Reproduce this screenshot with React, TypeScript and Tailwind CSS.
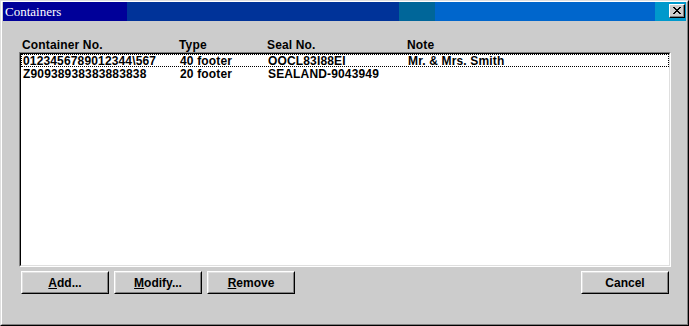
import React from "react";

const rows = [
  { c: "0123456789012344\\567", t: "40 footer", s: "OOCL83I88EI", n: "Mr. & Mrs. Smith" },
  { c: "Z90938938383883838", t: "20 footer", s: "SEALAND-9043949", n: "" },
];

function Btn({ children, className = "" }: { children: React.ReactNode; className?: string }) {
  return (
    <div className={"w-[88px] h-[23px] border-t border-l border-t-white border-l-white border-b border-r border-b-black border-r-black " + className}>
      <div className="w-full h-full border-t border-l border-t-[#dfdfdf] border-l-[#dfdfdf] border-b border-r border-b-[#808080] border-r-[#808080] bg-[#cccccc] flex items-center justify-center text-[12px] font-bold text-black leading-none">
        {children}
      </div>
    </div>
  );
}

export default function App() {
  return (
    <div
      className="w-[689px] h-[326px] bg-[#cccccc] border-t border-l border-t-[#dfdfdf] border-l-[#dfdfdf] border-b border-r border-b-black border-r-black"
      style={{ fontFamily: '"Liberation Sans", Arial, sans-serif' }}
    >
      <div className="w-full h-full border-t border-l border-t-white border-l-white border-b border-r border-b-[#808080] border-r-[#808080] flex flex-col pl-px pr-px">
        {/* title bar */}
        <div className="h-[19px] flex shrink-0">
          <div className="w-[124px] bg-[#000099] flex items-center pl-[2px]">
            <span className="text-white text-[13px] leading-none" style={{ fontFamily: '"Liberation Serif", "Times New Roman", serif' }}>
              Containers
            </span>
          </div>
          <div className="w-[272px] bg-[#003399]" />
          <div className="w-[36px] bg-[#006699]" />
          <div className="w-[220px] bg-[#0066cc]" />
          <div className="flex-1 bg-[#0099cc] flex items-start justify-end pt-[2px] pr-[1px]">
            <div className="w-[16px] h-[14px] border-t border-l border-t-white border-l-white border-b border-r border-b-black border-r-black">
              <div className="w-full h-full bg-[#cccccc] border-b border-r border-b-[#808080] border-r-[#808080] flex items-center justify-center">
                <svg width="8" height="7" viewBox="0 0 8 7" shapeRendering="crispEdges">
                  <path d="M0 0h2v1h-2zM6 0h2v1h-2zM1 1h2v1h-2zM5 1h2v1h-2zM2 2h4v1h-4zM3 3h2v1h-2zM2 4h4v1h-4zM1 5h2v1h-2zM5 5h2v1h-2zM0 6h2v1h-2zM6 6h2v1h-2z" fill="#000" />
                </svg>
              </div>
            </div>
          </div>
        </div>

        {/* body */}
        <div className="flex flex-col pl-[16px] pr-[15px] pt-[17px]">
          <div className="flex text-[12px] font-bold text-black leading-none h-[14px] pl-[3px] pt-[1px] tracking-[0.15px]">
            <div className="w-[157px]">Container No.</div>
            <div className="w-[88px]">Type</div>
            <div className="w-[140px]">Seal No.</div>
            <div>Note</div>
          </div>
          <div className="h-[215px] border-t border-l border-t-[#808080] border-l-[#808080] border-b border-r border-b-white border-r-white">
            <div className="w-full h-full border-t border-l border-t-black border-l-black border-b border-r border-b-[#dfdfdf] border-r-[#dfdfdf] bg-white">
              {rows.map((r, i) => (
                <div
                  key={i}
                  className={
                    "flex h-[13px] items-center text-[12px] font-bold text-black leading-none pl-[1px] tracking-[0.15px] " +
                    (i === 0 ? "border border-dotted border-black" : "border border-transparent")
                  }
                >
                  <div className="w-[157px] whitespace-nowrap">{r.c}</div>
                  <div className="w-[88px] whitespace-nowrap">{r.t}</div>
                  <div className="w-[140px] whitespace-nowrap">{r.s}</div>
                  <div className="whitespace-nowrap">{r.n}</div>
                </div>
              ))}
            </div>
          </div>
          <div className="flex mt-[4px] pl-[2px] pr-[2px]">
            <div className="flex gap-[6px]">
              <Btn><span><span className="underline">A</span>dd...</span></Btn>
              <Btn className="-ml-[1px]"><span><span className="underline">M</span>odify...</span></Btn>
              <Btn className="-ml-[1px]"><span><span className="underline">R</span>emove</span></Btn>
            </div>
            <div className="flex-1" />
            <Btn>Cancel</Btn>
          </div>
        </div>
      </div>
    </div>
  );
}
